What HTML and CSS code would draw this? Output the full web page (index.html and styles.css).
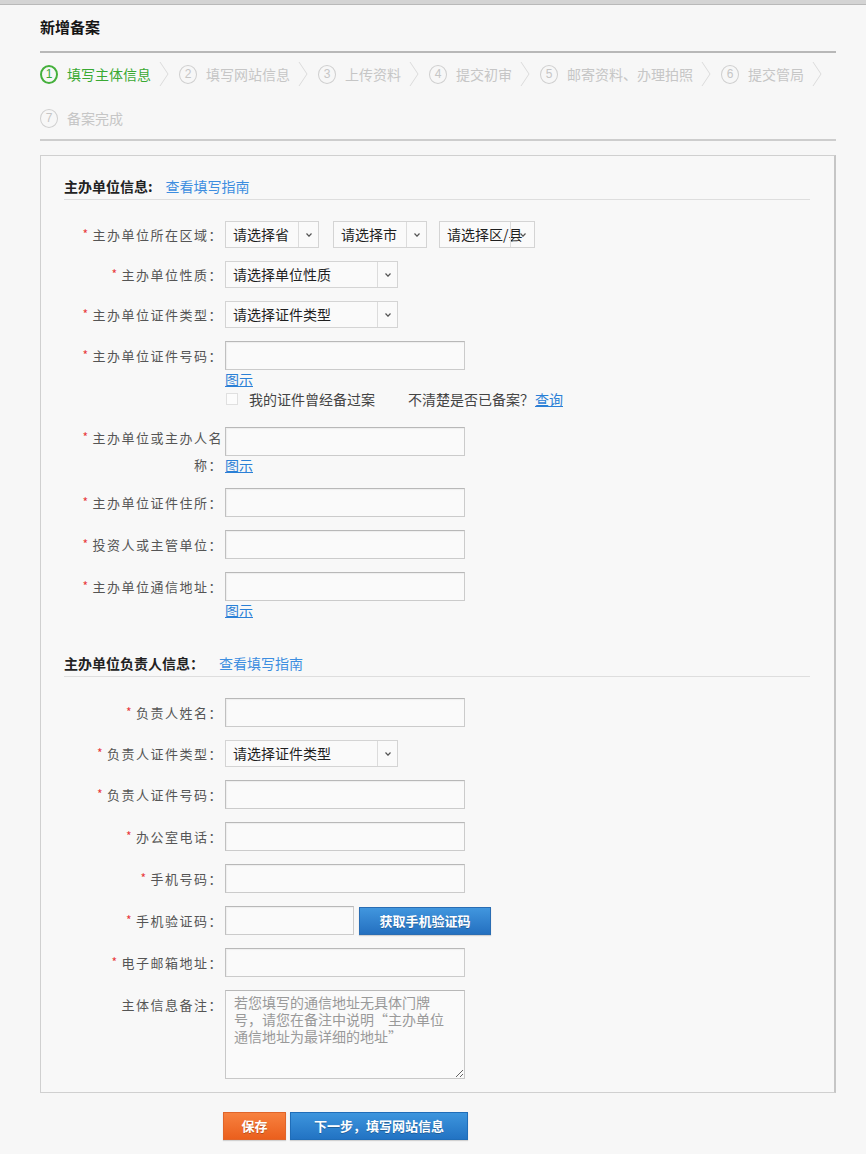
FILE: index.html
```html
<!DOCTYPE html>
<html lang="zh-CN">
<head>
<meta charset="utf-8">
<title>新增备案</title>
<link rel="stylesheet" href="styles.css">
</head>
<body>
<div class="topbar"></div>
<div class="page">
  <h1 class="title">新增备案</h1>
  <ol class="steps">
    <li class="step active"><span class="num">1</span><span class="txt">填写主体信息</span><svg class="chev" viewBox="0 0 10 26"><polyline points="1,1 9,13 1,25"/></svg></li>
    <li class="step"><span class="num">2</span><span class="txt">填写网站信息</span><svg class="chev" viewBox="0 0 10 26"><polyline points="1,1 9,13 1,25"/></svg></li>
    <li class="step"><span class="num">3</span><span class="txt">上传资料</span><svg class="chev" viewBox="0 0 10 26"><polyline points="1,1 9,13 1,25"/></svg></li>
    <li class="step"><span class="num">4</span><span class="txt">提交初审</span><svg class="chev" viewBox="0 0 10 26"><polyline points="1,1 9,13 1,25"/></svg></li>
    <li class="step"><span class="num">5</span><span class="txt">邮寄资料、办理拍照</span><svg class="chev" viewBox="0 0 10 26"><polyline points="1,1 9,13 1,25"/></svg></li>
    <li class="step"><span class="num">6</span><span class="txt">提交管局</span><svg class="chev" viewBox="0 0 10 26"><polyline points="1,1 9,13 1,25"/></svg></li>
    <li class="step"><span class="num">7</span><span class="txt">备案完成</span></li>
  </ol>

  <div class="panel">
    <section class="sec">
      <div class="sec-head"><b>主办单位信息:</b><a class="guide g1">查看填写指南</a></div>

      <div class="row sel-row">
        <label class="lbl"><span class="req">*</span>主办单位所在区域：</label>
        <div class="field inline">
          <div class="sel w94 gap14"><span>请选择省</span><i class="arr"><svg viewBox="0 0 6 4"><polyline points="0.5,0.5 3,3.2 5.5,0.5"/></svg></i></div>
          <div class="sel w94 gap12"><span>请选择市</span><i class="arr"><svg viewBox="0 0 6 4"><polyline points="0.5,0.5 3,3.2 5.5,0.5"/></svg></i></div>
          <div class="sel w96"><span>请选择区/县</span><i class="arr wide"><svg viewBox="0 0 6 4"><polyline points="0.5,0.5 3,3.2 5.5,0.5"/></svg></i></div>
        </div>
      </div>

      <div class="row sel-row">
        <label class="lbl"><span class="req">*</span>主办单位性质：</label>
        <div class="field">
          <div class="sel w173"><span>请选择单位性质</span><i class="arr"><svg viewBox="0 0 6 4"><polyline points="0.5,0.5 3,3.2 5.5,0.5"/></svg></i></div>
        </div>
      </div>

      <div class="row sel-row">
        <label class="lbl"><span class="req">*</span>主办单位证件类型：</label>
        <div class="field">
          <div class="sel w173"><span>请选择证件类型</span><i class="arr"><svg viewBox="0 0 6 4"><polyline points="0.5,0.5 3,3.2 5.5,0.5"/></svg></i></div>
        </div>
      </div>

      <div class="row row-check">
        <label class="lbl"><span class="req">*</span>主办单位证件号码：</label>
        <div class="field">
          <input class="inp" type="text">
          <a class="tip">图示</a>
          <div class="check"><span class="box"></span><span class="ctext">我的证件曾经备过案</span><span class="ask">不清楚是否已备案？</span><a class="query">查询</a></div>
        </div>
      </div>

      <div class="row">
        <label class="lbl two"><span class="req">*</span>主办单位或主办人名称：</label>
        <div class="field">
          <input class="inp" type="text">
          <a class="tip">图示</a>
        </div>
      </div>

      <div class="row">
        <label class="lbl"><span class="req">*</span>主办单位证件住所：</label>
        <div class="field"><input class="inp" type="text"></div>
      </div>

      <div class="row">
        <label class="lbl"><span class="req">*</span>投资人或主管单位：</label>
        <div class="field"><input class="inp" type="text"></div>
      </div>

      <div class="row">
        <label class="lbl"><span class="req">*</span>主办单位通信地址：</label>
        <div class="field">
          <input class="inp" type="text">
          <a class="tip">图示</a>
        </div>
      </div>
    </section>

    <section class="sec">
      <div class="sec-head"><b>主办单位负责人信息：</b><a class="guide g2">查看填写指南</a></div>

      <div class="row">
        <label class="lbl"><span class="req">*</span>负责人姓名：</label>
        <div class="field"><input class="inp" type="text"></div>
      </div>

      <div class="row sel-row">
        <label class="lbl"><span class="req">*</span>负责人证件类型：</label>
        <div class="field">
          <div class="sel w173"><span>请选择证件类型</span><i class="arr"><svg viewBox="0 0 6 4"><polyline points="0.5,0.5 3,3.2 5.5,0.5"/></svg></i></div>
        </div>
      </div>

      <div class="row">
        <label class="lbl"><span class="req">*</span>负责人证件号码：</label>
        <div class="field"><input class="inp" type="text"></div>
      </div>

      <div class="row">
        <label class="lbl"><span class="req">*</span>办公室电话：</label>
        <div class="field"><input class="inp" type="text"></div>
      </div>

      <div class="row">
        <label class="lbl"><span class="req">*</span>手机号码：</label>
        <div class="field"><input class="inp" type="text"></div>
      </div>

      <div class="row">
        <label class="lbl"><span class="req">*</span>手机验证码：</label>
        <div class="field inline">
          <input class="inp short" type="text">
          <button class="code-btn" type="button">获取手机验证码</button>
        </div>
      </div>

      <div class="row">
        <label class="lbl"><span class="req">*</span>电子邮箱地址：</label>
        <div class="field"><input class="inp" type="text"></div>
      </div>

      <div class="row">
        <label class="lbl">主体信息备注：</label>
        <div class="field"><textarea class="ta">若您填写的通信地址无具体门牌号，请您在备注中说明“主办单位通信地址为最详细的地址”</textarea></div>
      </div>
    </section>
  </div>

  <div class="actions">
    <button class="btn save" type="button">保存</button>
    <button class="btn next" type="button">下一步，填写网站信息</button>
  </div>
</div>
</body>
</html>
```

FILE: styles.css
```css
* { box-sizing: border-box; }

body {
  margin: 0;
  background: #f7f7f7;
  font-family: "Noto Sans CJK SC", "Noto Sans", sans-serif;
  color: #333;
}

.topbar {
  height: 5px;
  background: #d4d4d4;
  border-bottom: 1px solid #b9b9b9;
}

.page {
  width: 796px;
  margin-left: 40px;
}

.title {
  margin: 12px 0 0;
  font-size: 15px;
  font-weight: bold;
  line-height: 20px;
  padding-bottom: 14px;
  border-bottom: 2px solid #b8b8b8;
  color: #151515;
}

/* steps */
.steps {
  list-style: none;
  margin: 0 0 14px;
  padding: 8px 0;
  display: flex;
  flex-wrap: wrap;
  row-gap: 18px;
  border-bottom: 2px solid #cdcdcd;
}

.step {
  display: flex;
  align-items: center;
  height: 26px;
  font-size: 14px;
  line-height: 20px;
  color: #c6c6c6;
}

.num {
  width: 18px;
  height: 19px;
  border: 1.5px solid #cfcfcf;
  border-radius: 50%;
  font-family: "Liberation Sans", sans-serif;
  font-size: 12px;
  line-height: 16px;
  text-align: center;
  margin-right: 9px;
}

.step.active { color: #3aa933; }
.step.active .num { border: 2px solid #45b03c; line-height: 15px; }

.chev {
  width: 10px;
  height: 26px;
  margin: 0 10px 0 8px;
}
.chev polyline { fill: none; stroke: #dcdcdc; stroke-width: 1; }

/* panel */
.panel {
  border: 1px solid #d0d0d0;
  border-right: 2px solid #c6c6c6;
  background: #f8f8f8;
  padding: 0 24px 0 23px;
}

.sec { padding-top: 20px; }

.sec-head {
  line-height: 20px;
  padding-bottom: 3px;
  border-bottom: 1px solid #dedede;
  margin-bottom: 21px;
  display: flex;
  align-items: center;
}
.sec-head b { font-size: 14px; color: #222; }
.guide { font-size: 14px; color: #3d8ee0; }
.g1 { margin-left: 13px; }
.g2 { margin-left: 15px; }

.row {
  display: flex;
  align-items: flex-start;
  margin-bottom: 13px;
}
.row-check { margin-bottom: 18px; }

.lbl {
  width: 159px;
  flex: none;
  text-align: right;
  font-family: "Noto Sans CJK TC", "Noto Sans CJK SC", sans-serif;
  font-size: 13px;
  letter-spacing: 1.5px;
  color: #555;
  line-height: 29px;
}
.sel-row .lbl { line-height: 27px; }
.lbl.two { line-height: 27px; margin-top: -3px; margin-bottom: -5px; }

.req {
  color: #e8383d;
  font-size: 12px;
  line-height: 1;
  margin-right: 3px;
  vertical-align: 1px;
}

.field {
  margin-left: 2px;
  display: flex;
  flex-direction: column;
  align-items: flex-start;
}
.field.inline { flex-direction: row; align-items: center; }

/* selects */
.sel {
  position: relative;
  height: 27px;
  border: 1px solid #d4d4d4;
  background: #fafafa;
  font-size: 14px;
  line-height: 25px;
  color: #1f1f1f;
  padding-left: 7px;
  white-space: nowrap;
}
.w94 { width: 94px; }
.w96 { width: 96px; }
.w173 { width: 173px; }
.gap14 { margin-right: 14px; }
.gap12 { margin-right: 12px; }

.arr {
  position: absolute;
  right: 0;
  top: 0;
  bottom: 0;
  width: 20px;
  border-left: 1px solid #dcdcdc;
  display: flex;
  align-items: center;
  justify-content: center;
}
.arr.wide { width: 24px; }
.arr svg { width: 6px; height: 4px; }
.arr polyline { fill: none; stroke: #555; stroke-width: 1.2; }

/* inputs */
.inp {
  display: block;
  width: 240px;
  height: 29px;
  margin: 0;
  border: 1px solid #cbcbcb;
  border-top-color: #b8b8b8;
  border-left-color: #c0c0c0;
  background: #fafafa;
  box-shadow: inset 1px 1px 1px rgba(0, 0, 0, 0.05);
}
.inp.short { width: 129px; }

.tip {
  font-size: 14px;
  line-height: 19px;
  color: #2b80d6;
  text-decoration: underline;
}

.check {
  display: flex;
  align-items: center;
  height: 20px;
  font-family: "Noto Sans CJK TC", "Noto Sans CJK SC", sans-serif;
  font-size: 14px;
  line-height: 20px;
  color: #444;
}
.box {
  width: 12px;
  height: 12px;
  border: 1px solid #e0e0e0;
  background: #fcfcfc;
  margin: 0 11px 0 1px;
}
.ask { margin-left: 33px; }
.query { color: #2b80d6; text-decoration: underline; margin-left: 1px; }

.code-btn {
  width: 132px;
  height: 28px;
  margin-left: 5px;
  border: 1px solid #2a6db3;
  background: linear-gradient(#4196de, #2470c0);
  color: #fff;
  font-family: inherit;
  font-size: 13px;
  font-weight: bold;
  line-height: 26px;
  padding: 0;
  text-shadow: 0 1px 0 rgba(0, 0, 0, 0.25);
  box-shadow: 0 1px 1px rgba(0, 0, 0, 0.15);
}

.ta {
  display: block;
  width: 240px;
  height: 89px;
  margin: 0;
  padding: 3px 8px;
  border: 1px solid #c8c8c8;
  border-top-color: #b8b8b8;
  background: #fafafa;
  font-family: inherit;
  font-size: 14px;
  line-height: 17px;
  color: #999;
  resize: both;
}

/* actions */
.actions {
  margin: 19px 0 0 183px;
  display: flex;
  gap: 4px;
  padding-bottom: 14px;
}
.btn {
  height: 28px;
  padding: 0;
  color: #fff;
  font-family: inherit;
  font-size: 13px;
  font-weight: bold;
  line-height: 26px;
  text-shadow: 0 1px 0 rgba(0, 0, 0, 0.25);
  box-shadow: 0 1px 1px rgba(0, 0, 0, 0.15);
}
.save {
  width: 63px;
  border: 1px solid #e0652a;
  background: linear-gradient(#f7813f, #ea5f1d);
}
.next {
  width: 178px;
  border: 1px solid #1f6db8;
  background: linear-gradient(#3d95dd, #2273c3);
}
```
